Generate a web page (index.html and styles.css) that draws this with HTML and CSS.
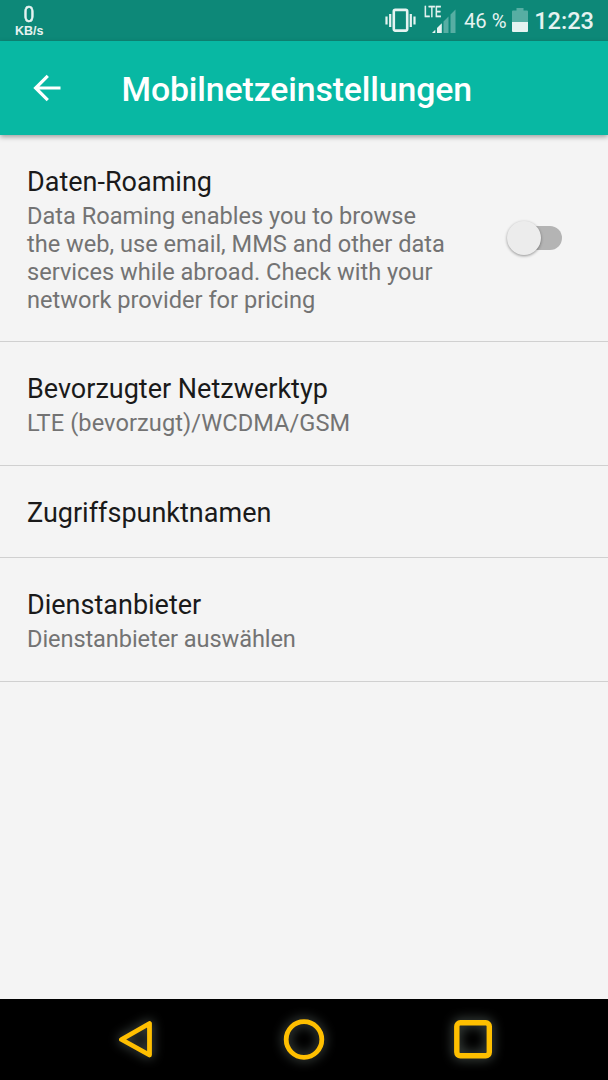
FILE: index.html
```
<!DOCTYPE html>
<html lang="de">

<head>
    <meta charset="utf-8">
    <title>Mobilnetzeinstellungen</title>
    <link rel="stylesheet" href="styles.css">
</head>

<body>
    <div class="status-bar">
        <div class="net-speed">
            <span class="net-value">0</span>
            <span class="net-unit">KB/s</span>
        </div>
        <div class="status-icons">
            <svg class="vibrate" width="31" height="24" viewBox="0 0 31 24">
                <rect x="8.8" y="1.9" width="13.4" height="20.700" rx="1.500" fill="none" stroke="#e6f3f1" stroke-width="2.6" />
                <path d="M5.200 6v13M25.800 6v13M1.500 8.500v8M29.500 8.500v8" stroke="#e6f3f1" stroke-width="2.2" />
            </svg>
            <div class="signal">
                <span class="signal-type">LTE</span>
                <svg width="24" height="24" viewBox="0 0 24 24">
                    <path d="M0 24l3.3-3.3V24z" fill="#e6f3f1" />
                    <path d="M5 24v-5L9.8 14.200V24z" fill="#e6f3f1" />
                    <path d="M11.500 24V12.5l5-5V24zM18.500 24V5.500l5-5V24z" fill="#57aea3" />
                </svg>
            </div>
            <span class="percent">46 %</span>
            <svg class="battery" width="16" height="24" viewBox="0 0 16 24">
                <path d="M0 3.5q0-1 1-1h3.5V0h7v2.5H15q1 0 1 1V14H0z" fill="#57aea3" />
                <path d="M0 14h16v9q0 1-1 1H1q-1 0-1-1z" fill="#e6f3f1" />
            </svg>
            <span class="clock">12:23</span>
        </div>
    </div>

    <header class="toolbar">
        <svg class="back" width="28" height="28" viewBox="0 0 28 28">
            <path d="M27.5 14H2.5M14.800 1.800L2.600 14l12.200 12.200" fill="none" stroke="#fff" stroke-width="3.2" />
        </svg>
        <h1>Mobilnetzeinstellungen</h1>
    </header>

    <main class="settings">
        <div class="item">
            <div class="item-text">
                <h2>Daten-Roaming</h2>
                <p>Data Roaming enables you to browse<br>the web, use email, MMS and other data<br>services while abroad. Check with your<br>network provider for pricing</p>
            </div>
            <div class="switch">
                <div class="thumb"></div>
            </div>
        </div>
        <div class="item">
            <div class="item-text">
                <h2>Bevorzugter Netzwerktyp</h2>
                <p class="network-type">LTE (bevorzugt)/WCDMA/GSM</p>
            </div>
        </div>
        <div class="item">
            <div class="item-text">
                <h2>Zugriffspunktnamen</h2>
            </div>
        </div>
        <div class="item">
            <div class="item-text">
                <h2>Dienstanbieter</h2>
                <p class="provider">Dienstanbieter auswählen</p>
            </div>
        </div>
    </main>

    <nav class="nav-bar">
        <svg class="nav-icon" width="80" height="80" viewBox="0 0 80 80">
            <path d="M26.5 40.5L54.5 24.5V56z" fill="none" stroke="#ffbf00" stroke-width="4.8" stroke-linejoin="round" />
        </svg>
        <svg class="nav-icon" width="80" height="80" viewBox="0 0 80 80">
            <circle cx="40" cy="40.5" r="17.8" fill="none" stroke="#ffbf00" stroke-width="4.8" />
        </svg>
        <svg class="nav-icon" width="80" height="80" viewBox="0 0 80 80">
            <rect x="23.8" y="23.8" width="32.5" height="33" rx="3.5" fill="none" stroke="#ffbf00" stroke-width="5.4" />
        </svg>
    </nav>
</body>

</html>
```
FILE: styles.css
```
body {
    font-family: Roboto, sans-serif;
    background-color: #f4f4f4;
    margin: 0;
    height: 1080px;
    display: flex;
    flex-direction: column;
    overflow: hidden;
}

h1,
h2,
p {
    margin: 0;
}

.status-bar {
    box-sizing: border-box;
    height: 41px;
    padding: 0 14px 0 15px;
    background-color: #0d8878;
    color: #e6f3f1;
    display: flex;
    justify-content: space-between;
}

.net-speed {
    display: flex;
    flex-direction: column;
    align-items: center;
    padding-top: 4px;
}

.net-value {
    font-size: 21.5px;
    line-height: 22px;
    transform: scaleX(0.9);
    -webkit-text-stroke: 0.5px #e6f3f1;
}

.net-unit {
    font-family: "Liberation Sans", sans-serif;
    font-size: 12.5px;
    font-weight: bold;
    line-height: 10px;
}

.status-icons {
    display: flex;
    align-items: flex-start;
}

.vibrate {
    margin-top: 8px;
}

.signal {
    display: flex;
    margin: 9px 0 0 8px;
}

.signal-type {
    width: 8px;
    font-size: 14px;
    line-height: 14px;
    margin-top: -4px;
    transform: scaleX(0.78);
    transform-origin: left;
    -webkit-text-stroke: 0.4px #e6f3f1;
}

.percent {
    font-size: 20.3px;
    line-height: 24px;
    margin: 9px 0 0 8px;
}

.battery {
    margin: 8px 0 0 5px;
}

.clock {
    font-size: 23.6px;
    font-weight: 500;
    line-height: 28px;
    margin: 7px 0 0 6.5px;
}

.toolbar {
    height: 94px;
    background-color: #08b8a3;
    color: white;
    display: flex;
    align-items: center;
    box-shadow: 0 2px 5px rgba(0, 0, 0, 0.35);
}

.back {
    margin: -1px 60.5px 0 33px;
}

.toolbar h1 {
    font-size: 33.8px;
    font-weight: 500;
    line-height: 40px;
    letter-spacing: -0.12px;
    margin-top: 3px;
}

.settings {
    flex: 1;
}

.item {
    display: flex;
    align-items: center;
    justify-content: space-between;
    padding: 31px 46px 28px 27px;
    border-bottom: 1px solid #d0d0d0;
}

.item:first-child {
    padding-bottom: 27px;
}

.item h2 {
    font-size: 27px;
    font-weight: normal;
    line-height: 32px;
    color: #1a1a1a;
}

.item p {
    font-size: 23.6px;
    line-height: 28px;
    color: #737373;
    margin-top: 4px;
}

.item:first-child p {
    margin-top: 3.5px;
    margin-bottom: 0.5px;
}

.item .network-type {
    letter-spacing: 0.08px;
}

.item .provider {
    letter-spacing: -0.09px;
}

.switch {
    display: flex;
    align-items: center;
    width: 48px;
    height: 24px;
    margin-top: -5px;
    border-radius: 12px;
    background-color: #b4b4b4;
}

.thumb {
    flex: none;
    width: 34px;
    height: 34px;
    margin-left: -7px;
    border-radius: 50%;
    background-color: #ececec;
    box-shadow: 0 1px 3px rgba(0, 0, 0, 0.4);
}

.nav-bar {
    height: 81px;
    padding: 0 95px;
    background-color: black;
    display: flex;
    justify-content: space-between;
}

.nav-icon {
    filter: drop-shadow(0 0 6px rgba(160, 180, 170, 0.6));
}
```
